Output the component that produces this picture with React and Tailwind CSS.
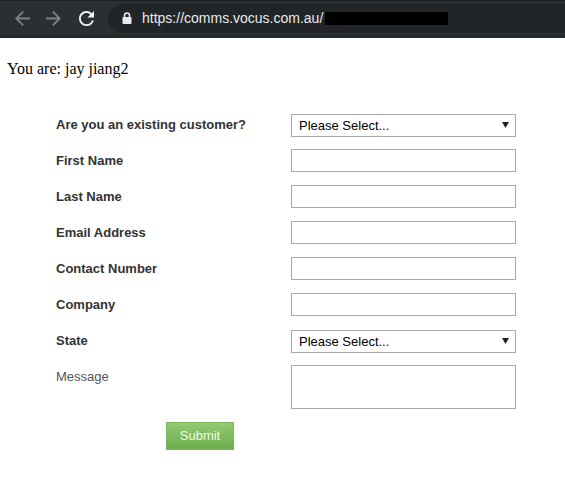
import React from 'react';

const textFields = ['First Name', 'Last Name', 'Email Address', 'Contact Number', 'Company'];

// Native select with the arrow drawn on top of it
const SelectBox = () => (
  <div className="relative w-[225px] h-[23px]">
    <select className="appearance-none w-full h-full border border-[#a9a9a9] bg-white pl-[7px] text-[13px] text-black outline-none">
      <option>Please Select...</option>
    </select>
    <svg className="absolute right-[7px] top-[9px] pointer-events-none" width="7" height="6" viewBox="0 0 7 6">
      <path d="M0 0 H7 L3.5 6 Z" fill="#222" />
    </svg>
  </div>
);

const Label = ({ children }) => (
  <label className="text-[13px] font-bold text-[#333] leading-4">{children}</label>
);

const BackIcon = ({ flip }) => (
  <svg width="15" height="15" viewBox="4 4 16 16" className={flip ? '-scale-x-100' : ''}>
    <path d="M20 11H7.83l5.59-5.59L12 4l-8 8 8 8 1.41-1.41L7.83 13H20v-2z" fill="#7d8185" />
  </svg>
);

const ReloadIcon = () => (
  <svg width="15" height="15" viewBox="4 4 16 16">
    <path
      d="M17.65 6.35A7.958 7.958 0 0 0 12 4c-4.42 0-7.99 3.58-7.99 8s3.57 8 7.99 8c3.73 0 6.84-2.55 7.73-6h-2.08A5.99 5.99 0 0 1 12 18c-3.31 0-6-2.69-6-6s2.69-6 6-6c1.66 0 3.14.69 4.22 1.78L13 11h7V4l-2.35 2.35z"
      fill="#f1f3f4"
    />
  </svg>
);

const LockIcon = () => (
  <svg width="10" height="12" viewBox="0 0 10 12">
    <path d="M2.5 5 V3.5 a2.5 2.5 0 0 1 5 0 V5" fill="none" stroke="#e8eaed" strokeWidth="1.6" />
    <rect x="0.5" y="5" width="9" height="7" rx="1" fill="#e8eaed" />
  </svg>
);

export default function App() {
  return (
    <div className="min-h-screen bg-white font-['Liberation_Sans',Arial,sans-serif]">
      {/* browser toolbar */}
      <header className="h-[38px] bg-[#2c2f31] border-t border-[#1d1f21] border-b-[3px] border-b-[#26292b] flex items-center">
        <div className="flex items-center pl-[15px]">
          <BackIcon />
          <span className="ml-[16px]">
            <BackIcon flip />
          </span>
          <span className="ml-[18px]">
            <ReloadIcon />
          </span>
        </div>
        <div className="ml-[14px] flex-1 h-[29px] rounded-l-full bg-[#222527] flex items-center pl-[14px]">
          <LockIcon />
          <span className="ml-[10px] text-[14px] text-[#e8eaed] leading-none">https://comms.vocus.com.au/</span>
          <span className="ml-[2px] w-[123px] h-[13px] bg-black" />
        </div>
      </header>

      <p className="mt-[22px] ml-[7px] font-['Liberation_Serif','Times_New_Roman',serif] text-[16px] leading-[18px] text-black">
        You are: jay jiang2
      </p>

      <form className="mt-[35px] ml-[56px] grid grid-cols-[235px_225px] gap-y-[13px] items-center">
        <Label>Are you an existing customer?</Label>
        <SelectBox />

        {textFields.map((name) => (
          <React.Fragment key={name}>
            <Label>{name}</Label>
            <input type="text" className="w-[225px] h-[23px] border border-[#a9a9a9] bg-white outline-none" />
          </React.Fragment>
        ))}

        <Label>State</Label>
        <SelectBox />

        <label className="self-start pt-[4px] text-[13px] text-[#555] leading-4">Message</label>
        <textarea className="w-[225px] h-[44px] border border-[#a9a9a9] bg-white resize-none outline-none" />

        <div className="col-span-2 pl-[110px]">
          <button
            type="button"
            className="w-[68px] h-[28px] border border-[#7ab75a] bg-gradient-to-b from-[#93c972] to-[#6cad4c] text-[13px] text-[#f3f8e6]"
          >
            Submit
          </button>
        </div>
      </form>
    </div>
  );
}
